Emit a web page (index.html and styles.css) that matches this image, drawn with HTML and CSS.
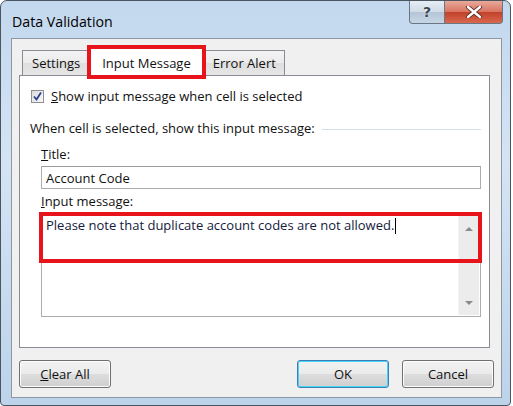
FILE: index.html
```html
<!DOCTYPE html>
<html lang="en">
<head>
    <meta charset="UTF-8">
    <title>Data Validation</title>
    <link rel="stylesheet" href="styles.css">
</head>
<body>
    <div class="window">
        <div class="titlebar">
            <span class="title">Data Validation</span>
            <div class="caption-btns">
                <span class="cap-btn help">?</span>
                <span class="cap-btn close">
                    <svg width="18" height="12" viewBox="0 0 18 12">
                        <path d="M3 1 L15 11 M15 1 L3 11" stroke="#5a2a22" stroke-width="4.2" stroke-linecap="round"/>
                        <path d="M3 1 L15 11 M15 1 L3 11" stroke="#fff" stroke-width="2.4" stroke-linecap="round"/>
                    </svg>
                </span>
            </div>
        </div>

        <div class="client">
            <div class="tabs">
                <div class="tab first">Settings</div>
                <div class="tab active">Input Message</div>
                <div class="tab">Error Alert</div>
            </div>

            <div class="panel">
                <label class="check">
                    <span class="box">
                        <svg width="11" height="11" viewBox="0 0 11 11">
                            <path d="M2 5.5 L4.5 8.5 L9 1.5" fill="none" stroke="#2a3f8f" stroke-width="1.8"/>
                        </svg>
                    </span>
                    <span><u>S</u>how input message when cell is selected</span>
                </label>

                <div class="group-title">
                    <span>When cell is selected, show this input message:</span>
                    <span class="rule"></span>
                </div>

                <div class="field">
                    <div class="label"><u>T</u>itle:</div>
                    <div class="input">Account Code</div>
                </div>

                <div class="field">
                    <div class="label"><u>I</u>nput message:</div>
                    <div class="textarea">
                        <div class="text">Please note that duplicate account codes are not allowed.<span class="caret"></span></div>
                        <div class="scroll">
                            <span class="arrow up"></span>
                            <span class="arrow down"></span>
                        </div>
                        <div class="mark"></div>
                    </div>
                </div>
            </div>

            <div class="buttons">
                <button class="btn"><u>C</u>lear All</button>
                <div class="right-btns">
                    <button class="btn default">OK</button>
                    <button class="btn">Cancel</button>
                </div>
            </div>
        </div>
    </div>
</body>
</html>
```

FILE: styles.css
```css
body {
    margin: 0;
    background: #fff;
    font-family: 'Open Sans', 'Noto Sans', sans-serif;
    font-size: 13px;
    color: #111;
}
.window {
    width: 511px;
    height: 406px;
    box-sizing: border-box;
    border: 1px solid #4b5560;
    border-radius: 7px 7px 4px 4px;
    background: linear-gradient(180deg, #c3d8ee 0%, #d4e4f4 40%, #bcd3ea 100%);
    padding: 0 8px 7px 10px;
    display: flex;
    flex-direction: column;
}
.titlebar {
    height: 38px;
    display: flex;
    justify-content: space-between;
    align-items: flex-start;
}
.title {
    font-size: 14.2px;
    color: #000;
    margin: 11px 0 0 1px;
}
.caption-btns {
    display: flex;
    margin-right: -1px;
}
.cap-btn {
    height: 22px;
    display: flex;
    align-items: center;
    justify-content: center;
    border: 1px solid #6a7684;
    border-top: none;
}
.help {
    width: 34px;
    border-radius: 0 0 0 4px;
    background: linear-gradient(180deg, #e6edf4 0%, #cfdbe7 50%, #b4c5d7 51%, #c7d6e5 100%);
    color: #3b4754;
    font-family: 'DejaVu Sans', sans-serif;
    font-weight: bold;
    font-size: 14px;
    text-shadow: 0 0 2px #fff;
}
.close {
    width: 57px;
    border-left: none;
    border-radius: 0 0 4px 0;
    background: linear-gradient(180deg, #e9a99c 0%, #d8735f 50%, #c2412a 51%, #d8694f 100%);
}
.client {
    flex: 1;
    background: #f0f0f0;
    border: 1px solid #8e98a3;
    display: flex;
    flex-direction: column;
    padding: 9px 9px 9px 7px;
}
.tabs {
    display: flex;
    align-items: flex-end;
    height: 27px;
    padding-left: 3px;
    position: relative;
    z-index: 1;
}
.tab {
    height: 25px;
    box-sizing: border-box;
    padding: 0 8px;
    display: flex;
    align-items: center;
    border: 1px solid #898c95;
    border-bottom: none;
    background: linear-gradient(180deg, #f3f3f3 0%, #ebebeb 50%, #dedede 51%, #e6e6e6 100%);
    margin-right: -1px;
}
.tab.first {
    padding: 0 10px 0 9px;
}
.tab.active {
    height: 28px;
    background: #fff;
    padding: 0 11px;
    margin: 0 1px -1px 0;
    outline: 4px solid #e8141c;
    outline-offset: -1px;
    position: relative;
    z-index: 2;
}
.panel {
    background: #fff;
    border: 1px solid #898c95;
    height: 273px;
    box-sizing: border-box;
    padding: 13px 8px 0 11px;
    margin-right: 2px;
}
.check {
    display: flex;
    align-items: center;
    gap: 7px;
    line-height: 15px;
}
.box {
    width: 11px;
    height: 11px;
    border: 1px solid #8e8f8f;
    background: linear-gradient(135deg, #dcdcdc, #f8f8f8);
    display: flex;
}
.group-title {
    display: flex;
    align-items: center;
    gap: 7px;
    margin: 17px 0 0 -1px;
    line-height: 15px;
}
.rule {
    flex: 1;
    height: 1px;
    background: #d5dfe5;
    margin-top: 1px;
}
.field {
    margin-left: 10px;
}
.label {
    margin-top: 10px;
    line-height: 17px;
}
.input {
    height: 23px;
    margin-top: 3px;
    box-sizing: border-box;
    border: 1px solid #abadb3;
    border-top-color: #9a9ca2;
    padding: 0 4px;
    display: flex;
    align-items: center;
}
.field + .field .label {
    margin-top: 4px;
}
.textarea {
    position: relative;
    height: 105px;
    margin-top: 2px;
    box-sizing: border-box;
    border: 1px solid #abadb3;
    display: flex;
}
.text {
    flex: 1;
    padding: 3px 4px;
    line-height: 18px;
    color: #141a40;
}
.caret {
    display: inline-block;
    width: 1px;
    height: 16px;
    background: #000;
    vertical-align: -4px;
    margin-left: 1px;
}
.scroll {
    width: 20px;
    background: #ececec;
    border-left: 1px solid #f4f4f4;
    display: flex;
    flex-direction: column;
    justify-content: space-between;
    align-items: center;
    padding: 13px 0 10px;
    margin: 1px 1px 1px 0;
}
.arrow {
    width: 0;
    height: 0;
    border-left: 4px solid transparent;
    border-right: 4px solid transparent;
}
.arrow.up {
    border-bottom: 4px solid #8a8a8a;
}
.arrow.down {
    border-top: 4px solid #8a8a8a;
}
.mark {
    position: absolute;
    left: -3px;
    top: -1px;
    right: -2px;
    height: 51px;
    border: 4px solid #e8141c;
    box-sizing: border-box;
}
.buttons {
    display: flex;
    justify-content: space-between;
    margin-top: 12px;
    margin-right: -2px;
}
.right-btns {
    display: flex;
    gap: 13px;
}
.btn {
    width: 92px;
    height: 28px;
    font-family: inherit;
    font-size: 13px;
    color: #111;
    border: 1px solid #707070;
    border-radius: 3px;
    background: linear-gradient(180deg, #f2f2f2 0%, #ebebeb 50%, #dddddd 51%, #cfcfcf 100%);
    box-shadow: inset 0 0 0 1px #fcfcfc;
    padding: 0;
}
.btn.default {
    border-color: #3c7fb1;
    box-shadow: inset 0 0 0 1px #48d3fb;
}
```
